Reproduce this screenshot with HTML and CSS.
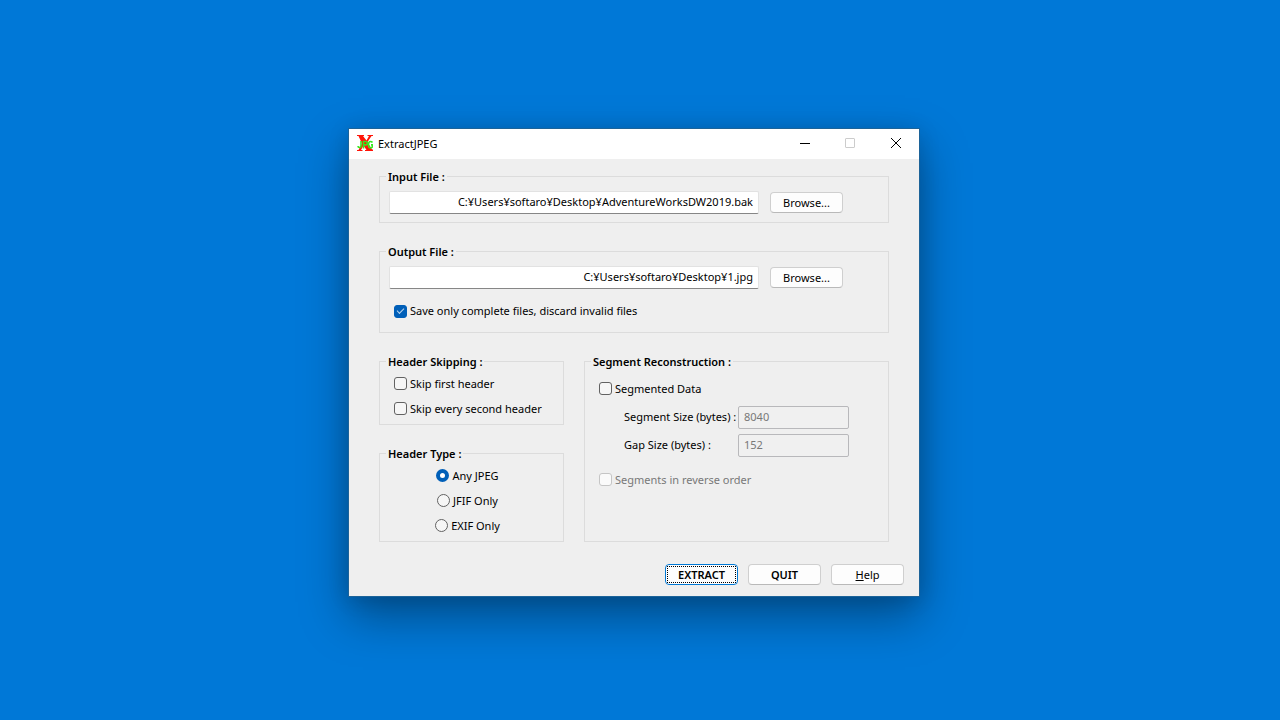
FILE: index.html
```html
<!DOCTYPE html>
<html lang="en">
<head>
<meta charset="utf-8">
<title>ExtractJPEG</title>
<link rel="stylesheet" href="styles.css">
</head>
<body>
<main class="window">
  <header class="titlebar">
    <svg class="app-icon" viewBox="0 0 16 16" aria-hidden="true">
      <path d="M0 0h7v1H6l3.500 4.500L12 1h-1.500V0H16v1h-1.500L10.500 7l4.500 7.500h1V16H8v-1h1.500L6.500 10.500 4 15h1.500v1H0v-1h1.500L5 8.500 1.500 1H0z" fill="#ff1408"/>
      <path d="M4 6v5q0 1.500-1.500 1.500T1 11M6.500 13.500V6.500h2q1.800 0 1.800 1.700t-1.800 1.700h-2M15.500 7.500q-1-1-2-1-2 0-2 3.200t2 3.200q1 0 2-1v-2h-1.500" fill="none" stroke="#36e81e" stroke-width="1.600"/>
    </svg>
    <h1 class="title">ExtractJPEG</h1>
    <button class="caption-button" type="button" aria-label="Minimize">
      <svg class="caption-icon" viewBox="0 0 12 12"><path d="M2 6.500h10"/></svg>
    </button>
    <button class="caption-button" type="button" aria-label="Maximize" disabled>
      <svg class="caption-icon" viewBox="0 0 12 12"><rect x="1.500" y="1.500" width="9" height="9" rx=".5"/></svg>
    </button>
    <button class="caption-button" type="button" aria-label="Close">
      <svg class="caption-icon" viewBox="0 0 12 12"><path d="M1 1l10 10M11 1L1 11"/></svg>
    </button>
  </header>

  <form class="content">
    <fieldset class="group input-group">
      <legend>Input File :</legend>
      <div class="file-row">
        <input class="field path" type="text" aria-label="Input file" value="C:¥Users¥softaro¥Desktop¥AdventureWorksDW2019.bak">
        <button class="button" type="button">Browse...</button>
      </div>
    </fieldset>

    <fieldset class="group output-group">
      <legend>Output File :</legend>
      <div class="file-row">
        <input class="field path" type="text" aria-label="Output file" value="C:¥Users¥softaro¥Desktop¥1.jpg">
        <button class="button" type="button">Browse...</button>
      </div>
      <label class="option save-option"><input class="check" type="checkbox" checked>Save only complete files, discard invalid files</label>
    </fieldset>

    <div class="columns">
      <div class="left-column">
        <fieldset class="group">
          <legend>Header Skipping :</legend>
          <label class="option"><input class="check" type="checkbox">Skip first header</label>
          <label class="option"><input class="check" type="checkbox">Skip every second header</label>
        </fieldset>
        <fieldset class="group">
          <legend>Header Type :</legend>
          <div class="radios">
            <label class="option"><input class="radio" type="radio" name="type" checked>Any JPEG</label>
            <label class="option"><input class="radio" type="radio" name="type">JFIF Only</label>
            <label class="option"><input class="radio" type="radio" name="type">EXIF Only</label>
          </div>
        </fieldset>
      </div>
      <fieldset class="group segment-group">
        <legend>Segment Reconstruction :</legend>
        <label class="option"><input class="check" type="checkbox">Segmented Data</label>
        <div class="sizes">
          <label for="segment-size">Segment Size (bytes) :</label>
          <input class="field" id="segment-size" type="text" value="8040" disabled>
          <label for="gap-size">Gap Size (bytes) :</label>
          <input class="field" id="gap-size" type="text" value="152" disabled>
        </div>
        <label class="option muted"><input class="check" type="checkbox" disabled>Segments in reverse order</label>
      </fieldset>
    </div>

    <footer class="actions">
      <button class="button strong default" type="button"><span class="focus-ring">EXTRACT</span></button>
      <button class="button strong" type="button">QUIT</button>
      <button class="button" type="button"><u>H</u>elp</button>
    </footer>
  </form>
</main>
</body>
</html>
```
FILE: styles.css
```css
* { box-sizing: border-box; }

body {
  margin: 0;
  min-height: 100vh;
  padding: 5px 12px 0 0;
  display: flex;
  align-items: center;
  justify-content: center;
  background: #0078d7;
  color: #000;
  font: 11px/18px "Noto Sans", "Open Sans", sans-serif;
}

input, button { font: inherit; color: inherit; }

.window {
  width: 572px;
  max-width: 100%;
  border: 1px solid #1c6399;
  background: #efefef;
  box-shadow: 0 20px 44px rgba(0, 0, 0, .36), 0 2px 20px rgba(0, 0, 0, .12);
}

.titlebar {
  display: flex;
  align-items: center;
  height: 30px;
  padding-left: 8px;
  background: #fff;
}
.app-icon { width: 16px; height: 16px; margin: 0 5px 2px 0; }
.title { flex: 1; margin: 0; font-size: 11px; font-weight: 400; }
.caption-button {
  display: flex;
  align-items: center;
  justify-content: center;
  width: 46px;
  height: 30px;
  padding: 0 0 2px;
  border: 0;
  background: none;
}
.caption-icon { width: 12px; height: 12px; fill: none; stroke: #000; }
.caption-button:disabled .caption-icon { stroke: #ccc; }

.content { padding: 9px 0 11px; }

.group {
  min-width: 0;
  margin: 0 30px 20px;
  padding: 1px 9px 3px;
  border: 1px solid #dcdcdc;
}
.group legend {
  margin-left: -3px;
  padding: 0 2px;
  font-weight: 600;
  line-height: 17px;
}
.input-group { padding: 6px 45px 8px 9px; }
.output-group { padding: 6px 45px 11px 9px; }

.file-row { display: flex; align-items: center; gap: 11px; }
.field {
  min-width: 0;
  height: 23px;
  padding: 0 5px 2px;
  border: 1px solid #e2e2e2;
  border-bottom-color: #868686;
  border-radius: 2px;
  background: #fff;
}
.path { flex: 1; text-align: right; }
.field:disabled { border-color: #b8b8bb; background: #f0f0f0; color: #787878; }

.button {
  flex: none;
  width: 73px;
  height: 21px;
  padding: 0;
  border: 1px solid #cfcfcf;
  border-bottom-color: #b9b9b9;
  border-radius: 4px;
  background: #fdfdfd;
  line-height: 18px;
}
.strong { font-weight: 600; }
.default { padding: 1px; border-color: #0078d4; }
.focus-ring { display: block; border: 1px dotted #000; line-height: 15px; }

.option {
  display: flex;
  align-items: center;
  gap: 3px;
  height: 25px;
  margin-left: 5px;
  white-space: nowrap;
}
.save-option { height: 18px; margin-top: 13px; margin-bottom: 1px; }
.muted { color: #787878; }

.check, .radio {
  appearance: none;
  display: grid;
  place-items: center;
  flex: none;
  width: 13px;
  height: 13px;
  margin: 0;
  border: 1px solid #626262;
  border-radius: 3px;
  background: #f6f6f6;
}
.check:checked { border-color: #005fb8; background: #005fb8; }
.check:checked::after {
  content: "";
  width: 6px;
  height: 3px;
  margin-bottom: 2px;
  border: solid #b9d6ef;
  border-width: 0 0 1px 1px;
  transform: rotate(-45deg);
}
.check:disabled { border-color: #c5c5c5; background: #fafafa; }
.radio { border-radius: 50%; }
.radio:checked { border: 4px solid #005fb8; background: #fff; }

.columns {
  display: grid;
  grid-template-columns: minmax(0, 37fr) minmax(0, 61fr);
  gap: 20px;
  margin: 0 30px;
}
.columns .group { margin: 0; }
.left-column { display: flex; flex-direction: column; gap: 20px; }
.segment-group.group { padding-top: 6px; }
.radios { display: flex; flex-direction: column; align-items: center; padding-right: 13px; }

.sizes {
  display: grid;
  grid-template-columns: 114px 111px;
  align-items: center;
  gap: 5px 0;
  margin: 5px 0 10px 30px;
}
.sizes label { padding-bottom: 2px; white-space: nowrap; }

.actions { display: flex; justify-content: flex-end; gap: 10px; padding: 22px 15px 0; }
```
